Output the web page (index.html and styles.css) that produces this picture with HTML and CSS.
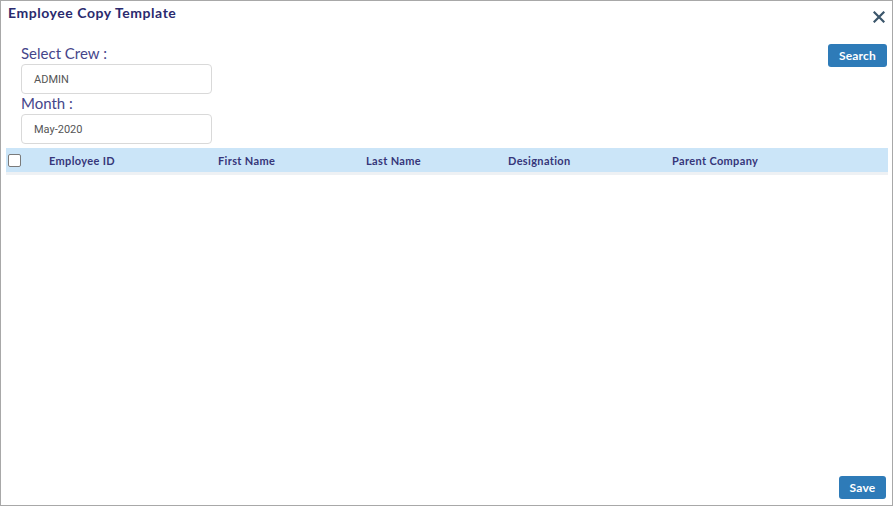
FILE: index.html
```html
<!DOCTYPE html>
<html>
<head>
<meta charset="utf-8">
<link rel="stylesheet" href="styles.css">
</head>
<body>
<div class="modal">
  <div class="modal-head">
    <div class="title">Employee Copy Template</div>
    <span class="close">
      <svg width="12" height="12" viewBox="0 0 12 12"><path d="M1.5 1.5 L10.5 10.5 M10.5 1.5 L1.5 10.5" stroke="#3b566b" stroke-width="2.2" stroke-linecap="square"/></svg>
    </span>
  </div>
  <div class="filters">
    <div class="form">
      <label class="lbl">Select Crew :</label>
      <div class="input">ADMIN</div>
      <label class="lbl">Month :</label>
      <div class="input">May-2020</div>
    </div>
    <button class="btn search">Search</button>
  </div>
  <div class="table">
    <div class="thead">
      <span class="cb"></span>
      <span class="th c1">Employee ID</span>
      <span class="th c2">First Name</span>
      <span class="th c3">Last Name</span>
      <span class="th c4">Designation</span>
      <span class="th c5">Parent Company</span>
    </div>
    <div class="tline"></div>
  </div>
  <div class="spacer"></div>
  <div class="footer">
    <button class="btn save">Save</button>
  </div>
</div>
</body>
</html>
```
FILE: styles.css
```css
html, body { margin: 0; padding: 0; background: #fff; }
.modal {
  width: 893px; height: 506px; box-sizing: border-box;
  border: 1px solid #a8a8a8;
  display: flex; flex-direction: column;
  font-family: Lato, "Open Sans", sans-serif;
}
.modal-head { display: flex; justify-content: space-between; align-items: flex-start; height: 40px; }
.title { font-weight: 700; font-size: 14px; color: #2a2a6e; margin: 3px 0 0 7px; letter-spacing: 0.55px; }
.close { margin: 10px 7px 0 0; display: block; line-height: 0; }
.filters { display: flex; justify-content: space-between; align-items: flex-start; margin-top: 3px; }
.form { margin-left: 20px; display: flex; flex-direction: column; width: 191px; }
.lbl { font-size: 15px; color: #45458a; line-height: 18px; height: 20px; }
.input {
  box-sizing: border-box; height: 30px; border: 1px solid #d9d9d9; border-radius: 4px;
  font-family: Roboto, "Liberation Sans", sans-serif; font-size: 11px; color: #555;
  padding: 0 0 0 12px; display: flex; align-items: center;
}
.btn {
  background: #2e7bb8; color: #fff; border: none; border-radius: 3px;
  font-family: Lato, sans-serif; font-weight: 700; font-size: 12px; padding: 0; letter-spacing: 0.2px;
}
.search { width: 59px; height: 23px; margin: 0 5px 0 0; }
.table { margin: 4px 4px 0 5px; }
.thead { height: 24px; background: #cbe5f8; display: flex; align-items: center; position: relative; }
.cb { width: 11px; height: 11px; border: 1px solid #7a7a7a; border-radius: 2px; background: #fff; margin-left: 2px; }
.th { position: absolute; font-size: 11px; font-weight: 700; color: #36367a; letter-spacing: 0.35px; }
.c1 { left: 43px; } .c2 { left: 212px; } .c3 { left: 360px; } .c4 { left: 502px; } .c5 { left: 666px; }
.tline { height: 3px; background: #eef1f4; }
.spacer { flex: 1; }
.footer { display: flex; justify-content: flex-end; padding: 0 6px 6px 0; }
.save { width: 47px; height: 23px; }
```
